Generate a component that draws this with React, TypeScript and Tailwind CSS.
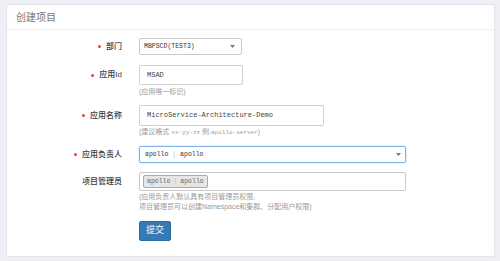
import React from "react";

const cjk = { fontFamily: '"Liberation Sans","Noto Sans CJK SC",sans-serif' };
const mono = { fontFamily: '"Liberation Mono","Noto Sans CJK SC",monospace' };

function Dot() {
  return <span className="inline-block w-[3px] h-[3px] rounded-full bg-[#e0474a] mr-[5px]" />;
}

function Label({ text, req }: { text: string; req?: boolean }) {
  return (
    <div className="w-[115px] shrink-0 flex items-center justify-end text-[8px] font-medium text-[#3a3a3a]" style={cjk}>
      {req && <Dot />}
      <span>{text}</span>
    </div>
  );
}

function Caret() {
  return (
    <svg width="5" height="3" viewBox="0 0 5 3" className="shrink-0">
      <path d="M0 0 H5 L2.5 3 Z" fill="#777" />
    </svg>
  );
}

export default function App() {
  return (
    <div className="w-[500px] h-[261px] bg-[#eff0f5] pt-[4px] pl-[6px]">
      <div className="w-[489px] h-[253px] bg-white border border-[#e3e5ea] rounded-[2px] shadow-[0_0_1px_rgba(0,0,0,0.05)]">
        <div className="h-[25px] border-b border-[#eeeff2] flex items-center pl-[9px] text-[10px] text-[#777]" style={cjk}>
          创建项目
        </div>
        <div className="pt-[8px] flex flex-col">
          {/* 部门 */}
          <div className="flex h-[17px]">
            <Label text="部门" req />
            <div className="ml-[17px] w-[103px] h-[17px] border border-[#c8c8c8] rounded-[2px] flex items-center justify-between pl-[4px] pr-[6px] text-[6.5px] text-[#333]" style={mono}>
              <span>MBPSCD(TEST3)</span>
              <Caret />
            </div>
          </div>
          {/* 应用Id */}
          <div className="flex mt-[10px]">
            <div className="flex h-[20px]">
              <Label text="应用Id" req />
            </div>
            <div className="ml-[17px] flex flex-col">
              <div className="w-[104px] h-[20px] border border-[#d0d0d0] rounded-[2px] flex items-center pl-[7px] text-[7px] text-[#444]" style={mono}>
                MSAD
              </div>
              <div className="mt-[2px] text-[7px] leading-[9px] text-[#999]" style={cjk}>(应用唯一标识)</div>
            </div>
          </div>
          {/* 应用名称 */}
          <div className="flex mt-[9px]">
            <div className="flex h-[21px]">
              <Label text="应用名称" req />
            </div>
            <div className="ml-[17px] flex flex-col">
              <div className="w-[185px] h-[21px] border border-[#d0d0d0] rounded-[2px] flex items-center pl-[7px] text-[7px] text-[#444]" style={mono}>
                MicroService-Architecture-Demo
              </div>
              <div className="mt-[1px] text-[7px] leading-[9px] text-[#999]" style={cjk}>
                (建议格式 <span className="text-[6px]" style={mono}>xx-yy-zz</span> 例:<span className="text-[6px]" style={mono}>apollo-server</span>)
              </div>
            </div>
          </div>
          {/* 应用负责人 */}
          <div className="flex h-[17px] mt-[9px]">
            <Label text="应用负责人" req />
            <div className="ml-[17px] w-[267px] h-[17px] border border-[#7fb0e8] rounded-[2px] shadow-[0_0_2px_rgba(102,175,233,0.5)] flex items-center justify-between pl-[5px] pr-[4px] text-[6.5px] text-[#333]" style={mono}>
              <span>apollo <span className="text-[#bbb]">|</span> apollo</span>
              <Caret />
            </div>
          </div>
          {/* 项目管理员 */}
          <div className="flex mt-[9px]">
            <div className="flex h-[19px]">
              <Label text="项目管理员" />
            </div>
            <div className="ml-[17px] flex flex-col">
              <div className="w-[267px] h-[19px] border border-[#c8c8c8] rounded-[2px] flex items-center pl-[3px]">
                <div className="h-[13px] px-[3px] border border-[#aaa] rounded-[2px] bg-[#e6e6e6] flex items-center text-[6.5px] text-[#666]" style={mono}>
                  apollo <span className="text-[#bbb] mx-[3px]">|</span> apollo
                </div>
              </div>
              <div className="mt-[1px] text-[7px] leading-[10px] text-[#999]" style={cjk}>
                (应用负责人默认具有项目管理员权限,
                <br />
                项目管理员可以创建Namespace和集群、分配用户权限)
              </div>
            </div>
          </div>
          {/* submit */}
          <div className="flex mt-[9px]">
            <div className="w-[132px] shrink-0" />
            <button className="w-[32px] h-[20px] bg-[#337ab7] border border-[#2e6da4] rounded-[2px] text-white text-[9px] flex items-center justify-center" style={cjk}>
              提交
            </button>
          </div>
        </div>
      </div>
    </div>
  );
}
